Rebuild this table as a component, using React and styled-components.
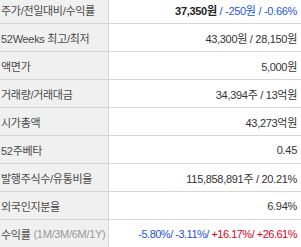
import React from 'react'
import styled, { createGlobalStyle } from 'styled-components'

const GlobalStyle = createGlobalStyle`
  html, body {
    margin: 0;
    padding: 0;
    background: #fff;
    overflow: hidden;
  }
`

const Table = styled.div`
  width: 301px;
  margin-top: -4px;
  font-family: "Liberation Sans", "Noto Sans CJK KR", sans-serif;
  font-size: 11px;
  color: #333;
  letter-spacing: -0.3px;
`

const Row = styled.div`
  display: grid;
  grid-template-columns: 109px 1fr;
  height: 27px;
  border-bottom: 1px solid #d6d6d6;
`

const Head = styled.div`
  background: #f0f0f0;
  border-right: 1px solid #d6d6d6;
  display: flex;
  align-items: center;
  padding: 1px 0 0 1px;
  color: #4a4a4a;
  white-space: nowrap;
  overflow: hidden;
`

const Cell = styled.div`
  display: flex;
  align-items: center;
  justify-content: flex-end;
  padding: 1px 4px 0 0;
  white-space: nowrap;
  letter-spacing: ${p => (p.$tight ? '-0.5px' : '-0.3px')};
`

const Sub = styled.span`
  color: #999;
  margin-left: 3px;
`

const Strong = styled.b`
  color: #222;
`

const Tone = styled.span`
  color: ${p => (p.$up ? '#e0001b' : '#1d52e8')};
`

const rows = [
  ['52Weeks 최고/최저', '43,300원 / 28,150원'],
  ['액면가', '5,000원'],
  ['거래량/거래대금', '34,394주 / 13억원'],
  ['시가총액', '43,273억원'],
  ['52주베타', '0.45'],
  ['발행주식수/유통비율', '115,858,891주 / 20.21%'],
  ['외국인지분율', '6.94%'],
]

export default function App() {
  return (
    <>
      <GlobalStyle />
      <Table>
        <Row>
          <Head>주가/전일대비/수익률</Head>
          <Cell>
            <Strong>37,350원</Strong>
            <Tone>&nbsp;/ -250원 / -0.66%</Tone>
          </Cell>
        </Row>
        {rows.map(([k, v]) => (
          <Row key={k}>
            <Head>{k}</Head>
            <Cell>{v}</Cell>
          </Row>
        ))}
        <Row>
          <Head>
            수익률<Sub>(1M/3M/6M/1Y)</Sub>
          </Head>
          <Cell $tight>
            <Tone>-5.80%/ -3.11%/&nbsp;</Tone>
            <Tone $up>+16.17%/ +26.61%</Tone>
          </Cell>
        </Row>
      </Table>
    </>
  )
}
